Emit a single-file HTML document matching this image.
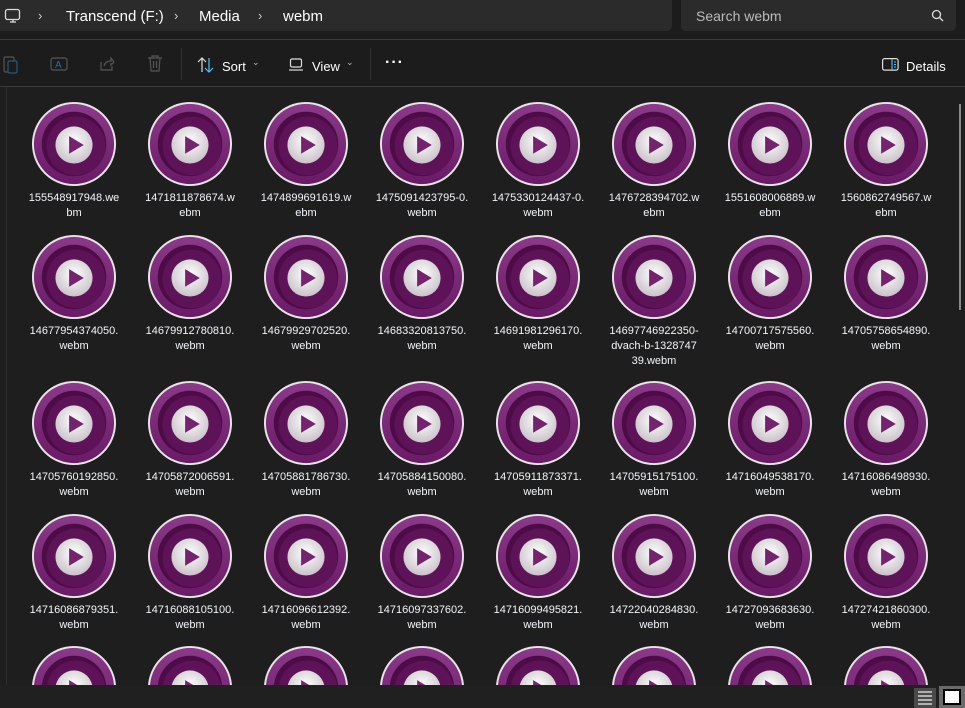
<!DOCTYPE html>
<html><head><meta charset="utf-8"><style>
*{margin:0;padding:0;box-sizing:border-box}
body{width:965px;height:708px;background:#1f1f1f;overflow:hidden;position:relative;font-family:"Liberation Sans",sans-serif;color:#fff}
.top{position:absolute;left:0;top:0;width:965px;height:39px;background:#1c1c1c}
.addr{position:absolute;left:-8px;top:0;width:680px;height:31px;background:#2b2b2b;border-radius:0 0 5px 5px}
.search{position:absolute;left:681px;top:0;width:275px;height:31px;background:#2b2b2b;border-radius:0 0 5px 5px}
.t{position:absolute;font-size:15px;white-space:nowrap}
.line{position:absolute;left:0;width:965px;height:1px;background:#3a3a3a}
.tb{position:absolute;left:0;top:40px;width:965px;height:46px;background:#1c1c1c}
.content{position:absolute;left:0;top:87px;width:965px;height:598px;background:#1e1e1e;overflow:hidden}
.it{position:absolute;width:110px;text-align:center;font-size:11px;line-height:15px;color:#f2f6fa}
.it svg{display:block;margin:0 auto}
.status{position:absolute;left:0;top:685px;width:965px;height:23px;background:#202020}
</style></head><body>
<svg width="0" height="0" style="position:absolute"><defs>
<radialGradient id="rg" cx="50%" cy="40%" r="60%"><stop offset="0" stop-color="#ffffff"/><stop offset="1" stop-color="#c9c3c9"/></radialGradient>
<linearGradient id="ring" x1="0" y1="0" x2="0" y2="1"><stop offset="0" stop-color="#8a3a88"/><stop offset="1" stop-color="#6a1a66"/></linearGradient>
<symbol id="ic" viewBox="0 0 88 88">
<circle cx="44" cy="44" r="43" fill="#e8e4e8"/>
<circle cx="44" cy="44" r="41" fill="url(#ring)"/>
<circle cx="44" cy="44" r="33" fill="#4d0c48"/>
<circle cx="46" cy="46" r="30" fill="#5e1258"/>
<circle cx="44" cy="45" r="19" fill="url(#rg)"/>
<path d="M39 36 L54 45 L39 54 Z" fill="#75226f"/>
</symbol></defs></svg>

<div class="top"></div>
<div class="addr"></div>
<div class="search"></div>
<svg style="position:absolute;left:4px;top:8px" width="18" height="16" viewBox="0 0 18 16"><rect x="1.5" y="1.5" width="14" height="10" rx="2" fill="none" stroke="#ddd" stroke-width="1.3"/><path d="M6 14h6M9 12v2" stroke="#ddd" stroke-width="1.3"/></svg>
<div class="t" style="left:38px;top:8px;color:#ccc;font-size:13px">›</div>
<div class="t" style="left:66px;top:8px">Transcend (F:)</div>
<div class="t" style="left:174px;top:8px;color:#ccc;font-size:13px">›</div>
<div class="t" style="left:199px;top:8px">Media</div>
<div class="t" style="left:258px;top:8px;color:#ccc;font-size:13px">›</div>
<div class="t" style="left:283px;top:8px">webm</div>
<div class="t" style="left:696px;top:8px;color:#bbb;font-size:14px">Search webm</div>
<svg style="position:absolute;left:931px;top:9px" width="13" height="13" viewBox="0 0 13 13"><circle cx="5.5" cy="5.5" r="4" fill="none" stroke="#ddd" stroke-width="1.3"/><path d="M8.5 8.5l3.5 3.5" stroke="#ddd" stroke-width="1.3"/></svg>
<div class="line" style="top:39px"></div>
<div class="tb"></div>
<svg style="position:absolute;left:3px;top:55px" width="16" height="20" viewBox="0 0 16 20"><rect x="1" y="2" width="10" height="15" rx="1.5" fill="none" stroke="#555" stroke-width="1.2"/><rect x="5" y="6" width="9" height="12" rx="1.5" fill="#1c1c1c" stroke="#2a5a7a" stroke-width="1.2"/></svg>
<svg style="position:absolute;left:50px;top:55px" width="18" height="18" viewBox="0 0 18 18"><rect x="1" y="3" width="16" height="12" rx="2" fill="none" stroke="#555" stroke-width="1.2"/><text x="5" y="13" font-size="10" fill="#2a6a9a" font-family="Liberation Sans">A</text></svg>
<svg style="position:absolute;left:99px;top:56px" width="16" height="16" viewBox="0 0 16 16"><path d="M2 6v8h11V10" fill="none" stroke="#555" stroke-width="1.2"/><path d="M5 10c1-4 4-5 7-5V2l3 4-3 3V7" fill="none" stroke="#555" stroke-width="1.2"/></svg>
<svg style="position:absolute;left:147px;top:55px" width="16" height="18" viewBox="0 0 16 18"><path d="M1 3h14M5 3V1h6v2M3 3l1 13h8l1-13M6.5 6v7M9.5 6v7" fill="none" stroke="#555" stroke-width="1.2"/></svg>
<div style="position:absolute;left:181px;top:48px;width:1px;height:32px;background:#333"></div>
<svg style="position:absolute;left:197px;top:57px" width="18" height="16" viewBox="0 0 18 16"><path d="M5 15V1M1 5l4-4 4 4" fill="none" stroke="#ddd" stroke-width="1.2"/><path d="M12 1v14M8 11l4 4 4-4" fill="none" stroke="#4cc2ff" stroke-width="1.2"/></svg>
<div class="t" style="left:222px;top:59px;font-size:13px">Sort</div>
<div class="t" style="left:252px;top:57px;font-size:9px;color:#bbb">⌄</div>
<svg style="position:absolute;left:289px;top:58px" width="14" height="13" viewBox="0 0 14 13"><rect x="1.5" y="1" width="11" height="8" rx="1.5" fill="none" stroke="#ddd" stroke-width="1.2"/><path d="M0 12h14" stroke="#ddd" stroke-width="1.2"/></svg>
<div class="t" style="left:312px;top:59px;font-size:13px">View</div>
<div class="t" style="left:346px;top:57px;font-size:9px;color:#bbb">⌄</div>
<div style="position:absolute;left:370px;top:48px;width:1px;height:32px;background:#333"></div>
<div class="t" style="left:385px;top:54px;font-size:16px;font-weight:bold;letter-spacing:1px">···</div>
<svg style="position:absolute;left:882px;top:58px" width="17" height="13" viewBox="0 0 17 13"><rect x="0.6" y="0.6" width="15.5" height="11.5" rx="2" fill="none" stroke="#ddd" stroke-width="1.2"/><path d="M10 1v11M12 4h2M12 6.5h2M12 9h2" stroke="#4cc2ff" stroke-width="1.1"/></svg>
<div class="t" style="left:906px;top:59px;font-size:13px">Details</div>
<div class="line" style="top:86px"></div>

<div class="content">
<div style="position:absolute;left:6px;top:0;width:1px;height:600px;background:#2e2e2e"></div>
<div style="position:absolute;left:959px;top:17px;width:2px;height:206px;background:#8a8a8a"></div>
<div id="g"></div>
</div>
<div class="status"></div>
<div style="position:absolute;left:914px;top:688px;width:22px;height:20px;background:#4a4a4a"></div>
<svg style="position:absolute;left:917px;top:690px" width="16" height="16" viewBox="0 0 16 16"><path d="M1 2h14M1 6h14M1 10h14M1 14h14" stroke="#eee" stroke-width="1.3"/></svg>
<div style="position:absolute;left:939px;top:686px;width:26px;height:22px;background:#6a6a6a"></div>
<div style="position:absolute;left:943px;top:689px;width:18px;height:16px;border:2px solid #000;background:#fff"></div>
<script>
var names=[
["155548917948.we","bm"],["1471811878674.w","ebm"],["1474899691619.w","ebm"],["1475091423795-0.","webm"],["1475330124437-0.","webm"],["1476728394702.w","ebm"],["1551608006889.w","ebm"],["1560862749567.w","ebm"],
["14677954374050.","webm"],["14679912780810.","webm"],["14679929702520.","webm"],["14683320813750.","webm"],["14691981296170.","webm"],["14697746922350-","dvach-b-1328747","39.webm"],["14700717575560.","webm"],["14705758654890.","webm"],
["14705760192850.","webm"],["14705872006591.","webm"],["14705881786730.","webm"],["14705884150080.","webm"],["14705911873371.","webm"],["14705915175100.","webm"],["14716049538170.","webm"],["14716086498930.","webm"],
["14716086879351.","webm"],["14716088105100.","webm"],["14716096612392.","webm"],["14716097337602.","webm"],["14716099495821.","webm"],["14722040284830.","webm"],["14727093683630.","webm"],["14727421860300.","webm"]];
var rows=[14,147,293,426,558];var h='';
for(var r=0;r<5;r++)for(var c=0;c<8;c++){var n=names[r*8+c];var x=74+116*c-55;
h+='<div class="it" style="left:'+x+'px;top:'+rows[r]+'px"><svg width="86" height="86"><use href="#ic" width="86" height="86"/></svg>'+(n?'<div style="margin-top:4px">'+n.join('<br>')+'</div>':'')+'</div>';}
document.getElementById('g').innerHTML=h;
</script>
</body></html>
